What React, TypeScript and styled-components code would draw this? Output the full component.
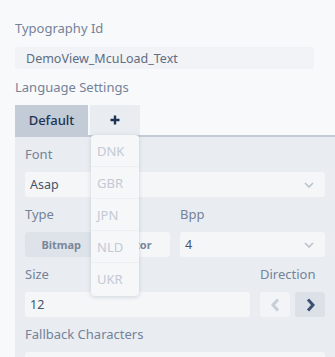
import React from "react";
import styled, { createGlobalStyle } from "styled-components";

const Global = createGlobalStyle`
  html, body { margin: 0; padding: 0; background: #f8f9fb; }
  body { font-family: "Noto Sans", "Open Sans", sans-serif; }
`;

const Page = styled.div`
  width: 335px;
  height: 357px;
  overflow: hidden;
  padding: 20px 0 0 15px;
  box-sizing: border-box;
`;

const Label = styled.div`
  font-size: 13px;
  line-height: 16px;
  color: #74829a;
  height: 16px;
  white-space: nowrap;
`;

const TopInput = styled.div`
  width: 299px;
  height: 22px;
  margin: 11px 0 10px;
  background: #f1f3f6;
  border-radius: 3px;
  box-sizing: border-box;
  padding-left: 11px;
  display: flex;
  align-items: center;
  font-size: 12.5px;
  color: #5f6c82;
`;

const TabBar = styled.div`
  margin-top: 10px;
  display: flex;
  gap: 2px;
  height: 30px;
  position: relative;
`;

const Tab = styled.div<{ $active?: boolean; $w: number }>`
  width: ${(p) => p.$w}px;
  height: 30px;
  display: flex;
  align-items: center;
  justify-content: center;
  background: ${(p) => (p.$active ? "#c2cbd6" : "#e9edf1")};
  color: #1e3354;
  font-size: 13px;
  font-weight: 500;
`;

const Panel = styled.div`
  border-top: 2px solid #c2cbd6;
  background: #e9edf1;
  padding: 9px 10px 20px;
  display: flex;
  flex-direction: column;
`;

const Group = styled.div<{ $grow?: boolean }>`
  display: flex;
  flex-direction: column;
  gap: 10px;
  margin-bottom: 9px;
  flex: ${(p) => (p.$grow ? 1 : "none")};
`;

const Row = styled.div`
  display: flex;
  gap: 10px;
`;

const Field = styled.div`
  height: 25px;
  width: 100%;
  box-sizing: border-box;
  background: #f4f6f8;
  border-radius: 3px;
  display: flex;
  align-items: center;
  justify-content: space-between;
  padding: 0 11px 0 5px;
  font-size: 12.5px;
  color: #44546b;
`;

const Toggle = styled.div`
  width: 145px;
  height: 25px;
  display: flex;
  border-radius: 3px;
  overflow: hidden;
`;

const Seg = styled.div<{ $active?: boolean }>`
  flex: 1;
  display: flex;
  align-items: center;
  justify-content: center;
  font-size: 11px;
  font-weight: 700;
  color: #7a879b;
  background: ${(p) => (p.$active ? "#dee3e9" : "#f4f6f8")};
`;

const DirBox = styled.div`
  display: flex;
  gap: 5px;
`;

const DirBtn = styled.div<{ $active?: boolean }>`
  width: 30px;
  height: 25px;
  border-radius: 3px;
  display: flex;
  align-items: center;
  justify-content: center;
  background: ${(p) => (p.$active ? "#dce1e7" : "#f2f4f7")};
`;

const Menu = styled.div`
  position: absolute;
  left: 76px;
  top: 30px;
  width: 48px;
  height: 161px;
  background: #f5f7f9;
  border-radius: 4px;
  box-shadow: 0 1px 4px rgba(40, 60, 90, 0.18);
  z-index: 5;
  display: flex;
  flex-direction: column;
`;

const MenuItem = styled.div<{ $last?: boolean }>`
  height: 32px;
  flex: none;
  box-sizing: border-box;
  display: flex;
  align-items: center;
  padding-left: 6px;
  font-size: 13px;
  color: #c3cad4;
  border-bottom: ${(p) => (p.$last ? "none" : "1px solid #eceff3")};
`;

const Chevron = () => (
  <svg width="10" height="6" viewBox="0 0 10 6">
    <polyline points="1,1 5,5 9,1" fill="none" stroke="#b9c2cd" strokeWidth="1.6" />
  </svg>
);

const Plus = () => (
  <svg width="10" height="10" viewBox="0 0 10 10">
    <path d="M5 0.5V9.5M0.5 5H9.5" stroke="#1e3354" strokeWidth="2.4" />
  </svg>
);

const Arrow = ({ dir, color }: { dir: "l" | "r"; color: string }) => (
  <svg width="9" height="14" viewBox="0 0 9 14">
    <polyline
      points={dir === "l" ? "7,1.5 2,7 7,12.5" : "2,1.5 7,7 2,12.5"}
      fill="none"
      stroke={color}
      strokeWidth="3"
      strokeLinejoin="miter"
    />
  </svg>
);

export default function App() {
  const langs = ["DNK", "GBR", "JPN", "NLD", "UKR"];
  return (
    <>
      <Global />
      <Page>
        <Label>Typography Id</Label>
        <TopInput>DemoView_McuLoad_Text</TopInput>
        <Label>Language Settings</Label>
        <TabBar>
          <Tab $active $w={73}>Default</Tab>
          <Tab $w={50}>
            <Plus />
          </Tab>
          <Menu>
            {langs.map((l, i) => (
              <MenuItem key={l} $last={i === langs.length - 1}>
                {l}
              </MenuItem>
            ))}
          </Menu>
        </TabBar>
        <Panel>
          <Group>
            <Label>Font</Label>
            <Field>
              Asap
              <Chevron />
            </Field>
          </Group>
          <Row>
            <Group>
              <Label>Type</Label>
              <Toggle>
                <Seg $active>Bitmap</Seg>
                <Seg>Vector</Seg>
              </Toggle>
            </Group>
            <Group $grow>
              <Label>Bpp</Label>
              <Field>
                4
                <Chevron />
              </Field>
            </Group>
          </Row>
          <Row>
            <Group $grow>
              <Label>Size</Label>
              <Field>12</Field>
            </Group>
            <Group>
              <Label>Direction</Label>
              <DirBox>
                <DirBtn>
                  <Arrow dir="l" color="#c6ced8" />
                </DirBtn>
                <DirBtn $active>
                  <Arrow dir="r" color="#3a5174" />
                </DirBtn>
              </DirBox>
            </Group>
          </Row>
          <Group>
            <Label>Fallback Characters</Label>
            <Field />
          </Group>
        </Panel>
      </Page>
    </>
  );
}
